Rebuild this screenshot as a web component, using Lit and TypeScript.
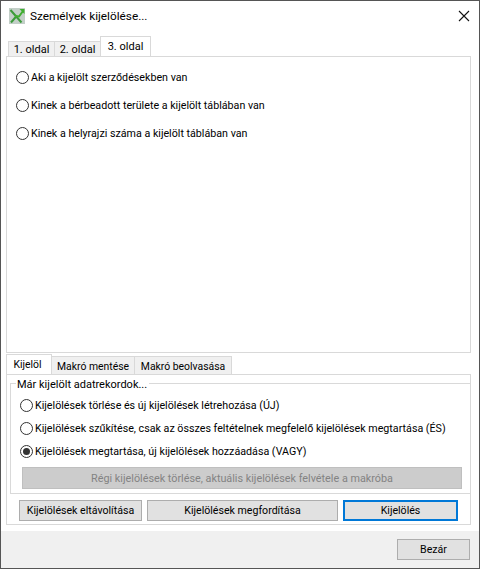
import { LitElement, html, css } from "lit";
import { customElement } from "lit/decorators.js";

@customElement("app-root")
export class AppRoot extends LitElement {
  static styles = css`
    :host {
      display: block;
      width: 480px;
      height: 569px;
      box-sizing: border-box;
      border: 1px solid #555;
      background: #fff;
      font-family: Roboto, "Noto Sans", sans-serif;
      font-size: 11px;
      color: #000;
      overflow: hidden;
      white-space: nowrap;
    }
    * { box-sizing: border-box; }
    .window { display: flex; flex-direction: column; height: 567px; }
    .title {
      height: 30px; display: flex; align-items: center;
      padding: 0 9px 0 8px; gap: 5px; font-size: 11.8px;
    }
    .title span { flex: 1; }
    .title svg { display: block; }
    .body { flex: 1; padding: 5px 8px 0 5px; }
    .tabs { display: flex; align-items: flex-end; height: 20px; font-size: 10.4px; }
    .tabs.top { padding-left: 2px; font-size: 11px; }
    .tab {
      height: 18px; background: #f0f0f0; border: 1px solid #d9d9d9; border-bottom: 0;
      display: flex; align-items: center; justify-content: center; margin-left: -1px;
      padding-top: 2px; color: #000;
    }
    .tabs.top .tab { height: 15px; padding-top: 0; }
    .tabs.top .tab:first-child { margin-left: 0; }
    .tabs .tab.active { height: 20px; background: #fff; padding-top: 0; position: relative; }
    .t1 { width: 47px; } .t2 { width: 47px; } .t3 { width: 51px; }
    .b1 { width: 46px; margin-left: 0; padding-right: 3px; } .b2 { width: 84px; } .b3 { width: 98px; }
    .panel {
      border: 1px solid #d9d9d9; background: #fff;
      height: 297px; padding: 6px 0 0 9px;
    }
    .row { height: 28px; display: flex; align-items: center; gap: 2px; font-size: 10.7px; }
    .radio {
      width: 13px; height: 13px; border: 1px solid #333; border-radius: 50%;
      background: #fff; display: flex; align-items: center; justify-content: center; flex: none;
    }
    .radio.on::after {
      content: ""; width: 7px; height: 7px; border-radius: 50%; background: #333;
    }
    .lower { margin-top: 1px; }
    .lpanel {
      border: 1px solid #d9d9d9; height: 151px; padding: 8px 0 0 3px; background: #fff;
    }
    .group {
      position: relative; border: 1px solid #d9d9d9; height: 111px; width: 461px;
      padding: 10px 8px 0 9px;
    }
    .legend {
      position: absolute; left: 5px; top: -7px; background: #fff; padding: 0 2px 0 1px; line-height: 15px;
    }
    .group .row { height: 23px; }
    .disabled {
      margin: 4px 0 0 2px; height: 22px; width: 440px; background: #ccc; border: 1px solid #bfbfbf;
      display: flex; align-items: center; justify-content: center; color: #838383; font-size: 10.8px;
    }
    .actions { display: flex; gap: 5px; margin: 6px 0 0 9px; }
    button {
      font: inherit; font-size: 10.6px; color: #000; background: #e1e1e1; border: 1px solid #adadad;
      height: 21px; padding: 0 0 1px; margin: 0;
    }
    .a1 { width: 123px; } .a2 { width: 191px; }
    .a3 { width: 115px; border: 2px solid #0078d7; }
    .footer {
      height: 37px; background: #f0f0f0; display: flex; justify-content: flex-end;
      align-items: flex-start; padding: 8px 9px 0 0;
    }
    .close { width: 73px; height: 21px; }
  `;

  render() {
    const top = [
      "Aki a kijelölt szerződésekben van",
      "Kinek a bérbeadott területe a kijelölt táblában van",
      "Kinek a helyrajzi száma a kijelölt táblában van",
    ];
    const modes = [
      ["Kijelölések törlése és új kijelölések létrehozása (ÚJ)", false],
      ["Kijelölések szűkítése, csak az összes feltételnek megfelelő kijelölések megtartása (ÉS)", false],
      ["Kijelölések megtartása, új kijelölések hozzáadása (VAGY)", true],
    ] as const;
    return html`
      <div class="window">
        <div class="title">
          <svg width="16" height="16" viewBox="0 0 16 16">
            <rect width="16" height="16" fill="#c3cfc8"/>
            <path d="M1.5 2 L12.5 14.5 M2 14.5 L8 7.5" stroke="#3c9a3a" stroke-width="2" fill="none"/>
            <path d="M6 8 L10 8.5 L14 3" stroke="#3fae2f" stroke-width="2" fill="none"/>
            <path d="M10.5 1 H15.5 V6 Z" fill="#3fae2f"/>
          </svg>
          <span>Személyek kijelölése...</span>
          <svg width="12" height="12" viewBox="0 0 12 12">
            <path d="M1 1 L11 11 M11 1 L1 11" stroke="#111" stroke-width="1.1" fill="none"/>
          </svg>
        </div>
        <div class="body">
          <div class="tabs top">
            <div class="tab t1">1. oldal</div>
            <div class="tab t2">2. oldal</div>
            <div class="tab active t3">3. oldal</div>
          </div>
          <div class="panel">
            ${top.map((t) => html`<div class="row"><span class="radio"></span><span>${t}</span></div>`)}
          </div>
          <div class="lower">
            <div class="tabs">
              <div class="tab active b1">Kijelöl</div>
              <div class="tab b2">Makró mentése</div>
              <div class="tab b3">Makró beolvasása</div>
            </div>
            <div class="lpanel">
              <div class="group">
                <div class="legend">Már kijelölt adatrekordok...</div>
                ${modes.map(
                  ([t, on]) => html`<div class="row"><span class="radio ${on ? "on" : ""}"></span><span>${t}</span></div>`
                )}
                <div class="disabled">Régi kijelölések törlése, aktuális kijelölések felvétele a makróba</div>
              </div>
              <div class="actions">
                <button class="a1">Kijelölések eltávolítása</button>
                <button class="a2">Kijelölések megfordítása</button>
                <button class="a3">Kijelölés</button>
              </div>
            </div>
          </div>
        </div>
        <div class="footer"><button class="close">Bezár</button></div>
      </div>
    `;
  }
}
